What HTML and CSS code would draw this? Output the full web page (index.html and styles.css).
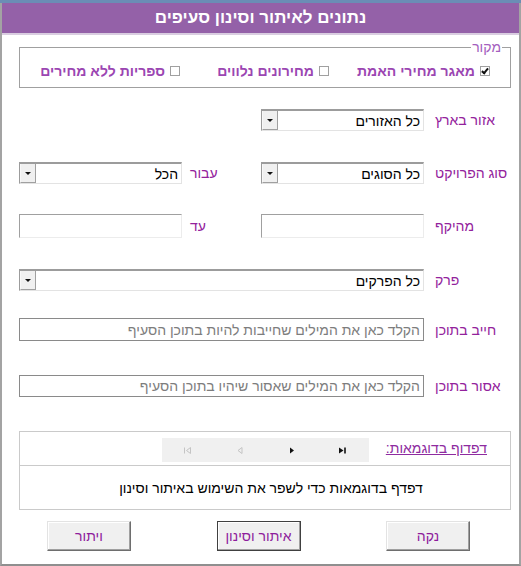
FILE: index.html
```html
<!DOCTYPE html>
<html lang="he" dir="rtl">
<head>
    <meta charset="UTF-8">
    <meta name="viewport" content="width=device-width, initial-scale=1.0">
    <title>נתונים לאיתור וסינון סעיפים</title>
    <link rel="stylesheet" href="styles.css">
</head>
<body>
    <div class="app-strip"></div>
    <div class="window">
        <div class="titlebar">נתונים לאיתור וסינון סעיפים</div>

        <div class="content">
            <fieldset class="source">
                <legend>מקור</legend>
                <div class="checks">
                    <label class="check check-first"><span class="box checked"></span>מאגר מחירי האמת</label>
                    <label class="check check-second"><span class="box"></span>מחירונים נלווים</label>
                    <label class="check"><span class="box"></span>ספריות ללא מחירים</label>
                </div>
            </fieldset>

            <div class="row row-region">
                <span class="label">אזור בארץ</span>
                <div class="combo"><span class="value">כל האזורים</span><span class="drop"></span></div>
            </div>

            <div class="row row-type">
                <span class="label">סוג הפרויקט</span>
                <div class="combo"><span class="value">כל הסוגים</span><span class="drop"></span></div>
                <span class="label label-side">עבור</span>
                <div class="combo"><span class="value">הכל</span><span class="drop"></span></div>
            </div>

            <div class="row row-range">
                <span class="label">מהיקף</span>
                <div class="field"></div>
                <span class="label label-side">עד</span>
                <div class="field"></div>
            </div>

            <div class="row row-chapter">
                <span class="label">פרק</span>
                <div class="combo wide"><span class="value">כל הפרקים</span><span class="drop"></span></div>
            </div>

            <div class="row row-must">
                <span class="label">חייב בתוכן</span>
                <div class="field framed wide"><span class="hint">הקלד כאן את המילים שחייבות להיות בתוכן הסעיף</span></div>
            </div>

            <div class="row row-forbid">
                <span class="label">אסור בתוכן</span>
                <div class="field framed wide"><span class="hint">הקלד כאן את המילים שאסור שיהיו בתוכן הסעיף</span></div>
            </div>

            <div class="examples">
                <div class="examples-head">
                    <a class="examples-link" href="#">דפדוף בדוגמאות:</a>
                    <div class="nav">
                        <span class="nav-btn">
                            <svg width="9" height="9" viewBox="0 0 9 9"><path d="M1.5 1.5v6" stroke="#c4c4c4" fill="none"/><path d="M7.5 1.5 3.5 4.5 7.5 7.5Z" stroke="#c4c4c4" fill="none"/></svg>
                        </span>
                        <span class="nav-btn">
                            <svg width="9" height="9" viewBox="0 0 9 9"><path d="M7 1.5 3 4.5 7 7.5Z" stroke="#c4c4c4" fill="none"/></svg>
                        </span>
                        <span class="nav-btn">
                            <svg width="9" height="9" viewBox="0 0 9 9"><path d="M3 1.5 7 4.5 3 7.5Z" fill="#111"/></svg>
                        </span>
                        <span class="nav-btn">
                            <svg width="9" height="9" viewBox="0 0 9 9"><path d="M1 1.5 5.5 4.5 1 7.5Z" fill="#111"/><path d="M7 1.5v6" stroke="#111" stroke-width="1.6"/></svg>
                        </span>
                    </div>
                </div>
                <div class="examples-body">דפדף בדוגמאות כדי לשפר את השימוש באיתור וסינון</div>
            </div>

            <div class="buttons">
                <button class="btn">נקה</button>
                <button class="btn btn-default">איתור וסינון</button>
                <button class="btn">ויתור</button>
            </div>
        </div>
    </div>
</body>
</html>
```

FILE: styles.css
```css
body {
    margin: 0;
    height: 566px;
    overflow: hidden;
    background: #ffffff;
    font-family: "Liberation Sans", Arial, sans-serif;
    font-size: 14px;
    color: #000;
}

.app-strip {
    height: 3px;
    background: #6b8db5;
}

.window {
    height: 561px;
    border-left: 2px solid #a3a3a3;
    border-right: 2px solid #a3a3a3;
    border-bottom: 2px solid #8f8f8f;
    background: #fff;
}

.titlebar {
    height: 30px;
    line-height: 30px;
    background: #9461a8;
    border-bottom: 2px solid #d9cde0;
    color: #fff;
    font-weight: bold;
    font-size: 17px;
    text-align: center;
}

.content {
    padding: 0 8px 0 17px;
}

/* source checkboxes */
.source {
    margin: 4px 0 0 0;
    padding: 8px 20px 8px 0;
    border: 1px solid #a0a0a0;
    min-width: 0;
}

.source legend {
    padding: 0 1px;
    margin-right: -12px;
    color: #a45fbe;
    font-size: 14px;
    line-height: 16px;
}

.checks {
    display: flex;
    height: 16px;
}

.check {
    display: flex;
    align-items: center;
    gap: 5px;
    color: #9b46b2;
    font-weight: bold;
    font-size: 14px;
    white-space: nowrap;
}

.check-first {
    width: 161px;
}

.check-second {
    width: 149px;
}

.box {
    width: 8px;
    height: 8px;
    border: 1px solid #a0a0a0;
    background: #fff;
    position: relative;
    flex: none;
}

.box.checked::after {
    content: "";
    position: absolute;
    left: 2px;
    top: 0px;
    width: 2px;
    height: 5px;
    border: solid #111;
    border-width: 0 2px 2px 0;
    transform: rotate(40deg);
}

/* form rows */
.row {
    display: grid;
    grid-template-columns: 87px 163px 79px 163px;
    align-items: center;
    height: 22px;
}

.row-region { margin-top: 21px; }
.row-type { margin-top: 31px; }
.row-range { margin-top: 30px; height: 24px; }
.row-chapter { margin-top: 31px; }
.row-must { margin-top: 27px; height: 23px; }
.row-forbid { margin-top: 34px; }

.label {
    text-align: left;
    padding-left: 11px;
    color: #93229c;
    white-space: nowrap;
}

.label-side {
    padding-left: 8px;
}

.combo {
    height: 100%;
    box-sizing: border-box;
    display: flex;
    align-items: center;
    justify-content: space-between;
    border: 1px solid;
    border-color: #9c9c9c #e3e3e3 #e3e3e3 #9c9c9c;
    border-top-width: 2px;
    background: #fff;
}

.combo .value {
    padding-right: 3px;
    white-space: nowrap;
}

.drop {
    align-self: stretch;
    width: 14px;
    background: #f0f0f0;
    border-left: 1px solid #f8f8f8;
    border-right: 1px solid #a0a0a0;
    border-bottom: 1px solid #a0a0a0;
    position: relative;
}

.drop::after {
    content: "";
    position: absolute;
    left: 4px;
    top: 8px;
    border-left: 3px solid transparent;
    border-right: 3px solid transparent;
    border-top: 3px solid #111;
}

.wide {
    grid-column: 2 / 5;
}

.field {
    height: 100%;
    box-sizing: border-box;
    border: 1px solid;
    border-color: #a0a0a0 #ececec #ececec #a0a0a0;
    background: #fff;
}

.field.framed {
    border-color: #8a8a8a;
    display: flex;
    align-items: center;
}

.hint {
    padding-right: 3px;
    color: #7d7d7d;
    white-space: nowrap;
}

/* examples box */
.examples {
    margin-top: 34px;
    height: 79px;
    box-sizing: border-box;
    border: 1px solid #cacaca;
}

.examples-head {
    height: 33px;
    display: flex;
    align-items: center;
    gap: 17px;
    padding-right: 23px;
    border-bottom: 1px solid #cacaca;
}

.examples-link {
    color: #8e2ba0;
    text-decoration: underline;
    margin-top: -2px;
}

.nav {
    direction: ltr;
    display: grid;
    grid-template-columns: repeat(4, 1fr);
    width: 207px;
    height: 24px;
    margin-top: 3px;
    background: #f0f0f0;
}

.nav-btn {
    display: flex;
    align-items: center;
    justify-content: center;
}

.examples-body {
    height: 44px;
    line-height: 44px;
    text-align: center;
    padding-left: 12px;
}

/* bottom buttons */
.buttons {
    display: flex;
    justify-content: space-between;
    margin-top: 11px;
    padding: 0 41px 0 28px;
}

.btn {
    width: 84px;
    height: 30px;
    padding: 0;
    background: #f0f0f0;
    border: 1px solid;
    border-color: #e3e3e3 #6e6e6e #6e6e6e #e3e3e3;
    box-shadow: inset -1px -1px #a0a0a0, inset 1px 1px #ffffff;
    color: #8e1c9c;
    font-family: "Liberation Sans", Arial, sans-serif;
    font-size: 14px;
}

.btn-default {
    border-color: #404040;
}
```
